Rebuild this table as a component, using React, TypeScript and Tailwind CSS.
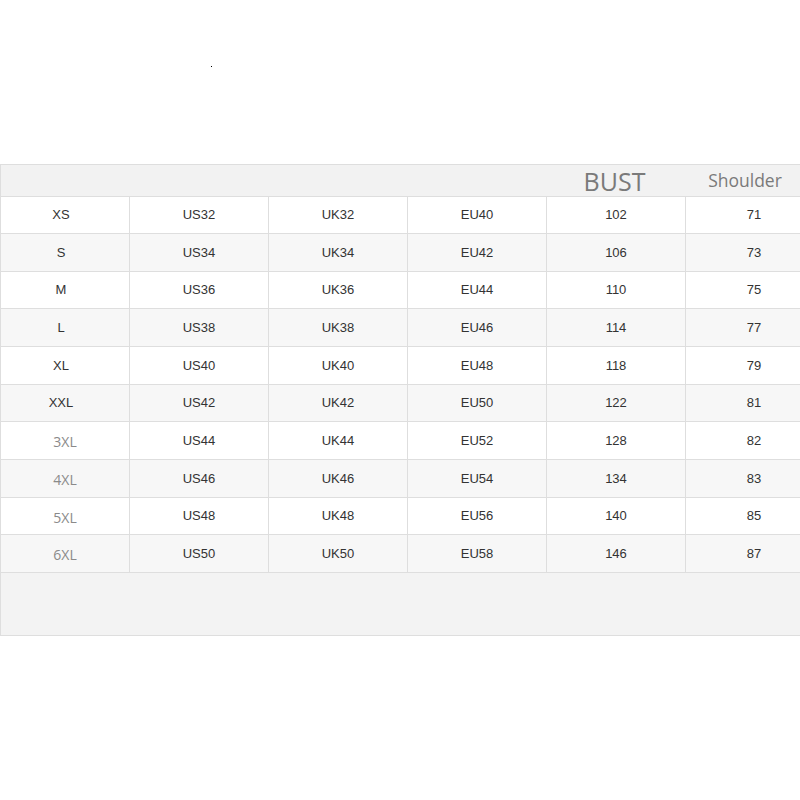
const rows = [
  { size: 'XS', us: 'US32', uk: 'UK32', eu: 'EU40', bust: '102', shoulder: '71', h: 'h-[37px]' },
  { size: 'S', us: 'US34', uk: 'UK34', eu: 'EU42', bust: '106', shoulder: '73', h: 'h-[38px]' },
  { size: 'M', us: 'US36', uk: 'UK36', eu: 'EU44', bust: '110', shoulder: '75', h: 'h-[37px]' },
  { size: 'L', us: 'US38', uk: 'UK38', eu: 'EU46', bust: '114', shoulder: '77', h: 'h-[38px]' },
  { size: 'XL', us: 'US40', uk: 'UK40', eu: 'EU48', bust: '118', shoulder: '79', h: 'h-[38px]' },
  { size: 'XXL', us: 'US42', uk: 'UK42', eu: 'EU50', bust: '122', shoulder: '81', h: 'h-[37px]' },
  { size: '3XL', us: 'US44', uk: 'UK44', eu: 'EU52', bust: '128', shoulder: '82', h: 'h-[38px]', soft: true },
  { size: '4XL', us: 'US46', uk: 'UK46', eu: 'EU54', bust: '134', shoulder: '83', h: 'h-[38px]', soft: true },
  { size: '5XL', us: 'US48', uk: 'UK48', eu: 'EU56', bust: '140', shoulder: '85', h: 'h-[37px]', soft: true },
  { size: '6XL', us: 'US50', uk: 'UK50', eu: 'EU58', bust: '146', shoulder: '87', h: 'h-[38px]', soft: true },
]

export default function App() {
  return (
    <div className="w-[800px] h-[800px] bg-white overflow-hidden font-['Liberation_Sans',Arial,sans-serif] text-[13px] text-[#333]">
      {/* 顶部留白 */}
      <div className="h-[164px] pt-[66px] pl-[211px]">
        <div className="w-[1px] h-[1px] bg-black" />
      </div>

      <div className="border-l border-t border-[#dedede]">
        {/* 表头 */}
        <div className="h-[32px] flex bg-[#f2f2f2] border-b border-[#dedede] font-['Open_Sans',sans-serif] text-[#7a7a7a]">
          <div className="w-[546px]" />
          <div className="w-[139px] flex items-center justify-center text-[25px] leading-none pt-[2px] pr-[4px]">BUST</div>
          <div className="flex-1 flex items-center justify-center pl-[4px] text-[17.5px] leading-none">Shoulder</div>
        </div>

        {rows.map((r, i) => (
          <div
            key={r.size}
            className={`${r.h} grid grid-cols-[128px_139px_139px_139px_139px_1fr] border-b border-[#dedede] ${
              i % 2 === 0 ? 'bg-white' : 'bg-[#f7f7f7]'
            }`}
          >
            <div
              className={`flex items-center justify-center ${
                r.soft ? "font-['Open_Sans',sans-serif] text-[14px] text-[#8a8a8a] pt-[2px]" : 'pr-[8px]'
              }`}
            >
              {r.size}
            </div>
            <div className="flex items-center justify-center border-l border-[#dedede]">{r.us}</div>
            <div className="flex items-center justify-center border-l border-[#dedede]">{r.uk}</div>
            <div className="flex items-center justify-center border-l border-[#dedede]">{r.eu}</div>
            <div className="flex items-center justify-center border-l border-[#dedede]">{r.bust}</div>
            <div className="flex items-center justify-center border-l border-[#dedede] pl-[22px]">{r.shoulder}</div>
          </div>
        ))}

        {/* 底部空白区 */}
        <div className="h-[63px] bg-[#f3f3f3] border-b border-[#dedede]" />
      </div>
    </div>
  )
}
